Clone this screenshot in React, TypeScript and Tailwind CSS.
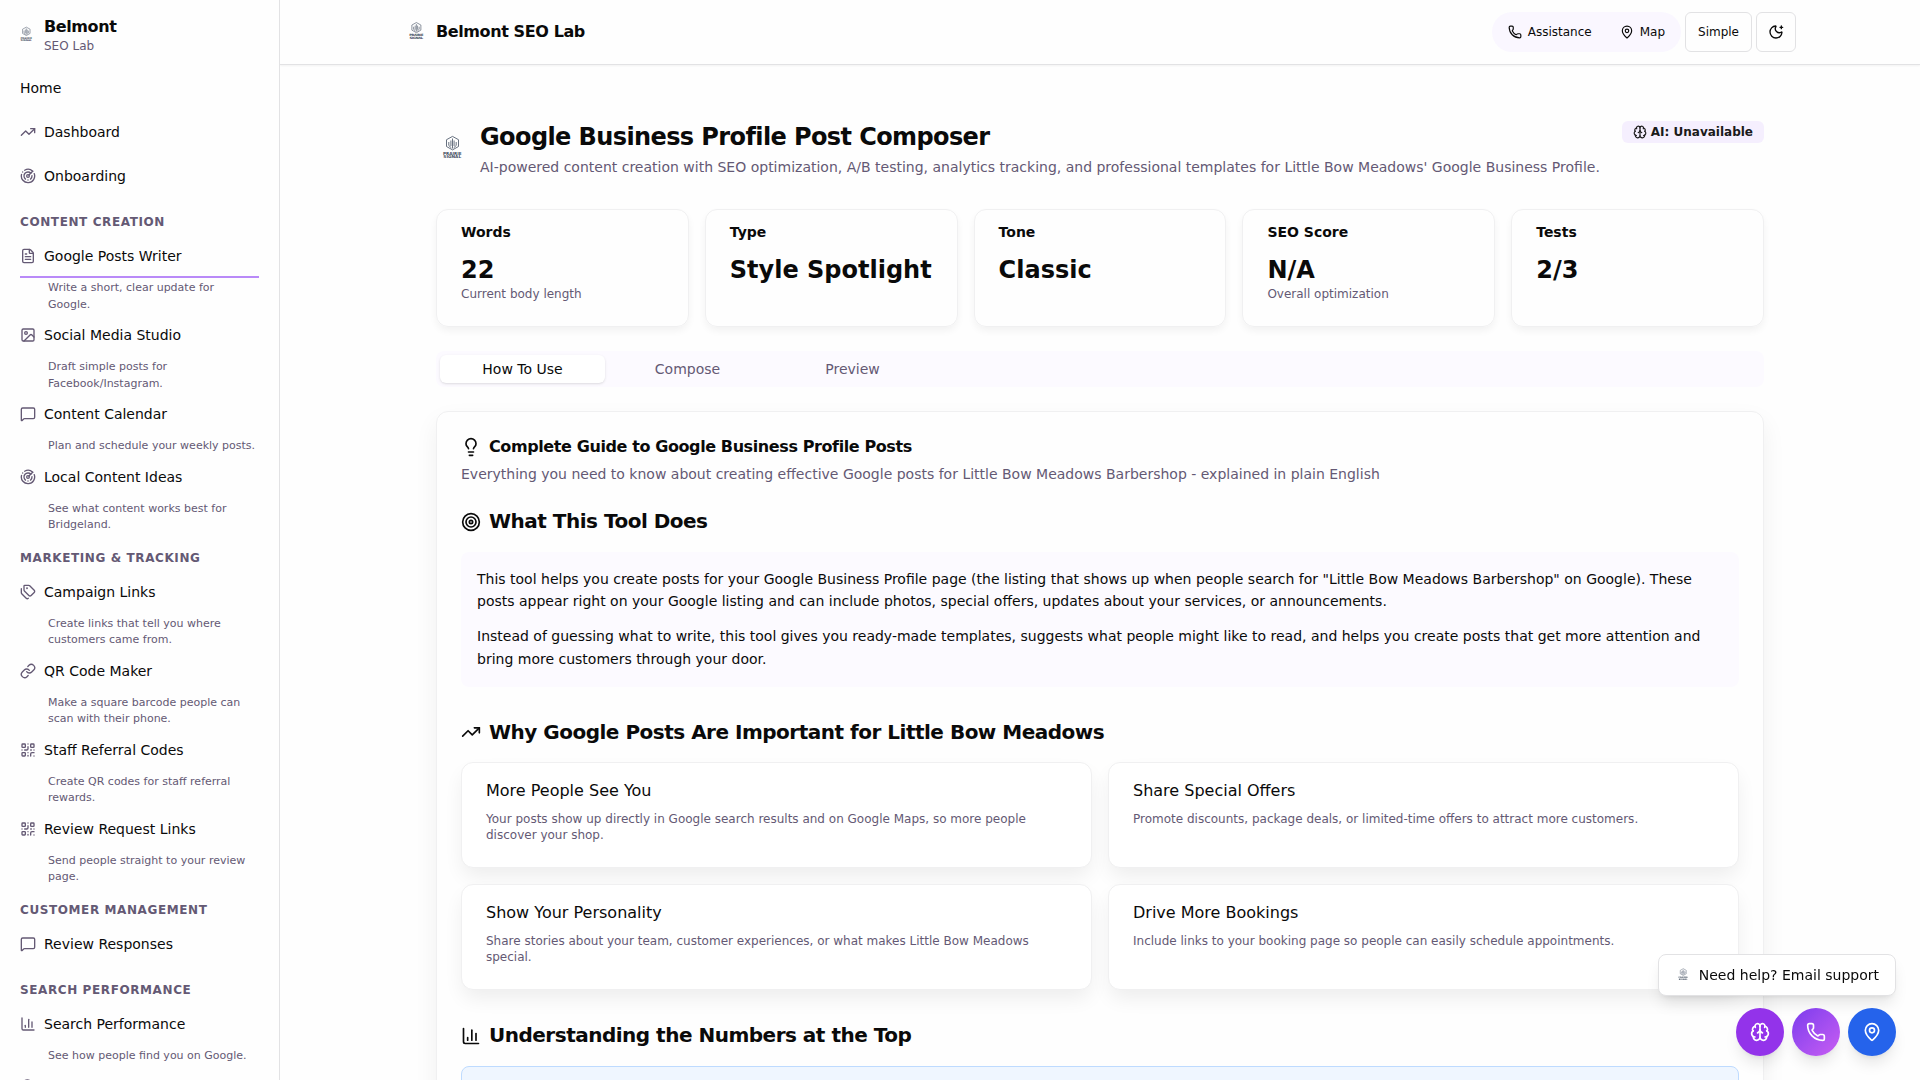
import type { ReactNode } from "react";
import {
  Brain,
  ChartColumn,
  FileText,
  Image,
  Lightbulb,
  Link,
  MapPin,
  MessageSquare,
  MoonStar,
  Phone,
  QrCode,
  Radar,
  Search,
  Tags,
  Target,
  TrendingUp,
  type LucideIcon,
} from "lucide-react";

type NavEntry = { label: string; icon?: LucideIcon; desc?: string; active?: boolean };
type NavSection = { title?: string; items: NavEntry[] };

const sections: NavSection[] = [
  {
    items: [
      { label: "Home" },
      { label: "Dashboard", icon: TrendingUp },
      { label: "Onboarding", icon: Radar },
    ],
  },
  {
    title: "Content Creation",
    items: [
      { label: "Google Posts Writer", icon: FileText, desc: "Write a short, clear update for Google.", active: true },
      { label: "Social Media Studio", icon: Image, desc: "Draft simple posts for Facebook/Instagram." },
      { label: "Content Calendar", icon: MessageSquare, desc: "Plan and schedule your weekly posts." },
      { label: "Local Content Ideas", icon: Radar, desc: "See what content works best for Bridgeland." },
    ],
  },
  {
    title: "Marketing & Tracking",
    items: [
      { label: "Campaign Links", icon: Tags, desc: "Create links that tell you where customers came from." },
      { label: "QR Code Maker", icon: Link, desc: "Make a square barcode people can scan with their phone." },
      { label: "Staff Referral Codes", icon: QrCode, desc: "Create QR codes for staff referral rewards." },
      { label: "Review Request Links", icon: QrCode, desc: "Send people straight to your review page." },
    ],
  },
  { title: "Customer Management", items: [{ label: "Review Responses", icon: MessageSquare }] },
  {
    title: "Search Performance",
    items: [
      { label: "Search Performance", icon: ChartColumn, desc: "See how people find you on Google." },
      { label: "", icon: Search },
    ],
  },
];

const stats = [
  { label: "Words", value: "22", note: "Current body length" },
  { label: "Type", value: "Style Spotlight" },
  { label: "Tone", value: "Classic" },
  { label: "SEO Score", value: "N/A", note: "Overall optimization" },
  { label: "Tests", value: "2/3" },
];

const benefits = [
  {
    title: "More People See You",
    text: "Your posts show up directly in Google search results and on Google Maps, so more people discover your shop.",
  },
  {
    title: "Share Special Offers",
    text: "Promote discounts, package deals, or limited-time offers to attract more customers.",
  },
  {
    title: "Show Your Personality",
    text: "Share stories about your team, customer experiences, or what makes Little Bow Meadows special.",
  },
  {
    title: "Drive More Bookings",
    text: "Include links to your booking page so people can easily schedule appointments.",
  },
];

function Logo({ className }: { className: string }) {
  return (
    <svg viewBox="0 0 32 32" className={className} fill="none" stroke="#566172">
      <path d="M16.500 3.400l6 3.300v6.800l-6 3.400-6-3.400V6.700z" strokeWidth="0.900" />
      <path d="M16.500 5.500v10M14.900 7.500v5.500M18.100 7.500v5.500M12.800 9v3.500l2.500 2.300M20.200 9v3.500l-2.500 2.300" strokeWidth="0.900" />
      <g fill="#3f4b5c" stroke="none" fontFamily="DejaVu Sans" fontWeight="700" fontSize="4.100">
        <text x="7" y="21.600" textLength="18.500" lengthAdjust="spacingAndGlyphs">PRAIRIE</text>
        <text x="7.300" y="25.300" textLength="17.900" lengthAdjust="spacingAndGlyphs">SIGNAL</text>
      </g>
    </svg>
  );
}

function SectionHeading({ icon: Icon, raised, children }: { icon: LucideIcon; raised?: boolean; children: ReactNode }) {
  return (
    <h3 className="mb-4 flex h-7 items-center gap-2 text-xl font-semibold tracking-tight">
      <Icon className="size-5" />
      <span className={raised ? "pb-0.5" : ""}>{children}</span>
    </h3>
  );
}

function Sidebar() {
  return (
    <aside className="h-full w-[280px] shrink-0 overflow-hidden border-r border-[#e2e2e4] px-5">
      <div className="-ml-1 flex h-[66px] items-center gap-2 pt-1">
        <Logo className="size-5" />
        <div className="pt-0.5">
          <div className="text-base leading-5 font-bold tracking-tight">Belmont</div>
          <div className="text-xs leading-[18px] text-[#645974]">SEO Lab</div>
        </div>
      </div>
      <nav>
        {sections.map((section, i) => (
          <div key={i}>
            {section.title && (
              <h2 className="pt-4 pb-1 text-xs font-semibold tracking-wider text-[#645974] uppercase">
                {section.title}
              </h2>
            )}
            {section.items.map(({ label, icon: Icon, desc, active }) => (
              <div key={label}>
                <a
                  className={
                    active
                      ? "flex h-11 items-center gap-2 border-b-2 border-[#b98af8] pt-0.5 text-sm"
                      : "flex h-11 items-center gap-2 text-sm"
                  }
                >
                  {Icon && <Icon className="size-4 text-[#645974]" />}
                  {label}
                </a>
                {desc && (
                  <p className="pt-0.5 pl-7 text-[11px] leading-[16.5px] text-[#645974]">{desc}</p>
                )}
              </div>
            ))}
          </div>
        ))}
      </nav>
    </aside>
  );
}

function TopBar() {
  return (
    <header className="h-[65px] shrink-0 border-b border-[#e2e2e4] shadow-xs">
      <div className="mx-auto flex h-full w-[1392px] items-center justify-between">
        <div className="flex items-center gap-2 text-base font-bold tracking-tight">
          <Logo className="size-6" />
          Belmont SEO Lab
        </div>
        <div className="flex items-center gap-1 text-xs">
          <div className="flex h-10 items-center gap-1 rounded-full bg-[#faf7ff] px-1">
            <span className="flex items-center gap-1.5 px-3">
              <Phone className="size-3.5" />
              Assistance
            </span>
            <span className="flex items-center gap-1.5 px-3">
              <MapPin className="size-3.5" />
              Map
            </span>
          </div>
          <button className="h-10 rounded-md border border-[#e2e2e4] px-3">Simple</button>
          <button className="flex size-10 items-center justify-center rounded-md border border-[#e2e2e4]">
            <MoonStar className="size-4" />
          </button>
        </div>
      </div>
    </header>
  );
}

function GuideCard() {
  return (
    <section className="mt-6 rounded-xl border border-[#f0f0f1] p-6 pt-[25px] shadow-[0_10px_24px_rgba(0,0,0,0.06)]">
      <h2 className="flex items-center gap-2 text-base leading-5 font-semibold tracking-tight">
        <Lightbulb className="size-5" />
        Complete Guide to Google Business Profile Posts
      </h2>
      <p className="mt-[7px] text-sm text-[#645974]">
        Everything you need to know about creating effective Google posts for Little Bow Meadows Barbershop -
        explained in plain English
      </p>
      <div className="mt-[23.6px]">
        <SectionHeading icon={Target} raised>
          What This Tool Does
        </SectionHeading>
        <div className="rounded-lg bg-[#fcfaff] p-4 text-sm leading-[22.75px]">
          <p className="mb-3">
            This tool helps you create posts for your Google Business Profile page (the listing that shows up when
            people search for "Little Bow Meadows Barbershop" on Google). These posts appear right on your Google
            listing and can include photos, special offers, updates about your services, or announcements.
          </p>
          <p>
            Instead of guessing what to write, this tool gives you ready-made templates, suggests what people might
            like to read, and helps you create posts that get more attention and bring more customers through your
            door.
          </p>
        </div>
      </div>
      <div className="mt-[31.4px]">
        <SectionHeading icon={TrendingUp}>Why Google Posts Are Important for Little Bow Meadows</SectionHeading>
        <div className="grid grid-cols-2 gap-4">
          {benefits.map((b) => (
            <div
              key={b.title}
              className="h-[106px] rounded-xl border border-[#f0f0f1] bg-white px-6 pt-4 shadow-[0_10px_20px_-2px_rgba(0,0,0,0.07)]"
            >
              <h4 className="text-base">{b.title}</h4>
              <p className="mt-2 text-xs text-[#645974]">{b.text}</p>
            </div>
          ))}
        </div>
      </div>
      <div className="mt-[31.6px]">
        <SectionHeading icon={ChartColumn} raised>
          Understanding the Numbers at the Top
        </SectionHeading>
        <div className="h-40 rounded-lg border border-[#bedbff] bg-[#eff6ff]" />
      </div>
    </section>
  );
}

export default function App() {
  return (
    <div className="flex h-[1080px] w-[1920px] overflow-hidden bg-[#fefefe] font-['DejaVu_Sans',sans-serif] text-[#0a0a0a]">
      <Sidebar />
      <div className="flex min-w-0 flex-1 flex-col overflow-hidden">
        <TopBar />
        <main className="mx-auto w-[1328px] pt-14">
          <div className="flex items-start justify-between">
            <div className="flex items-center gap-3">
              <Logo className="size-8" />
              <div>
                <h1 className="text-2xl leading-8 font-bold tracking-tight">Google Business Profile Post Composer</h1>
                <p className="mt-1 text-sm text-[#645974]">
                  AI-powered content creation with SEO optimization, A/B testing, analytics tracking, and professional
                  templates for Little Bow Meadows' Google Business Profile.
                </p>
              </div>
            </div>
            <span className="flex h-[22px] items-center gap-1 rounded-md bg-[#f5effe] px-[11px] text-xs font-semibold text-[#1a1a1a]">
              <Brain className="size-3.5" />
              AI: Unavailable
            </span>
          </div>

          <div className="mt-8 grid grid-cols-5 gap-4">
            {stats.map((s) => (
              <div
                key={s.label}
                className="h-[118px] rounded-xl border border-[#f0f0f1] px-6 pt-3 shadow-[0_4px_8px_-1px_rgba(0,0,0,0.06)]"
              >
                <div className="text-sm font-semibold">{s.label}</div>
                <div className="mt-3 text-2xl font-bold">{s.value}</div>
                {s.note && <div className="text-xs text-[#645974]">{s.note}</div>}
              </div>
            ))}
          </div>

          <div className="mt-6 grid h-9 grid-cols-8 rounded-lg bg-[#fcfaff] p-1 text-center text-sm leading-7 text-[#645974]">
            <div className="rounded-md bg-white text-[#0a0a0a] shadow-sm">How To Use</div>
            <div>Compose</div>
            <div>Preview</div>
          </div>

          <GuideCard />
        </main>
      </div>

      <div className="fixed right-6 bottom-6 flex flex-col items-end gap-3">
        <div className="flex h-[42px] items-center gap-2 rounded-lg border border-[#e2e2e4] bg-white px-4 text-sm shadow-lg">
          <Logo className="size-4" />
          Need help? Email support
        </div>
        <div className="flex gap-2 text-white">
          <div className="flex size-12 items-center justify-center rounded-full bg-[#9333ea] shadow-lg">
            <Brain className="size-5" />
          </div>
          <div className="flex size-12 items-center justify-center rounded-full bg-linear-to-br from-[#7c3aed] to-[#c95cf2] shadow-lg">
            <Phone className="size-5" />
          </div>
          <div className="flex size-12 items-center justify-center rounded-full bg-[#2563eb] shadow-lg">
            <MapPin className="size-5" />
          </div>
        </div>
      </div>
    </div>
  );
}
